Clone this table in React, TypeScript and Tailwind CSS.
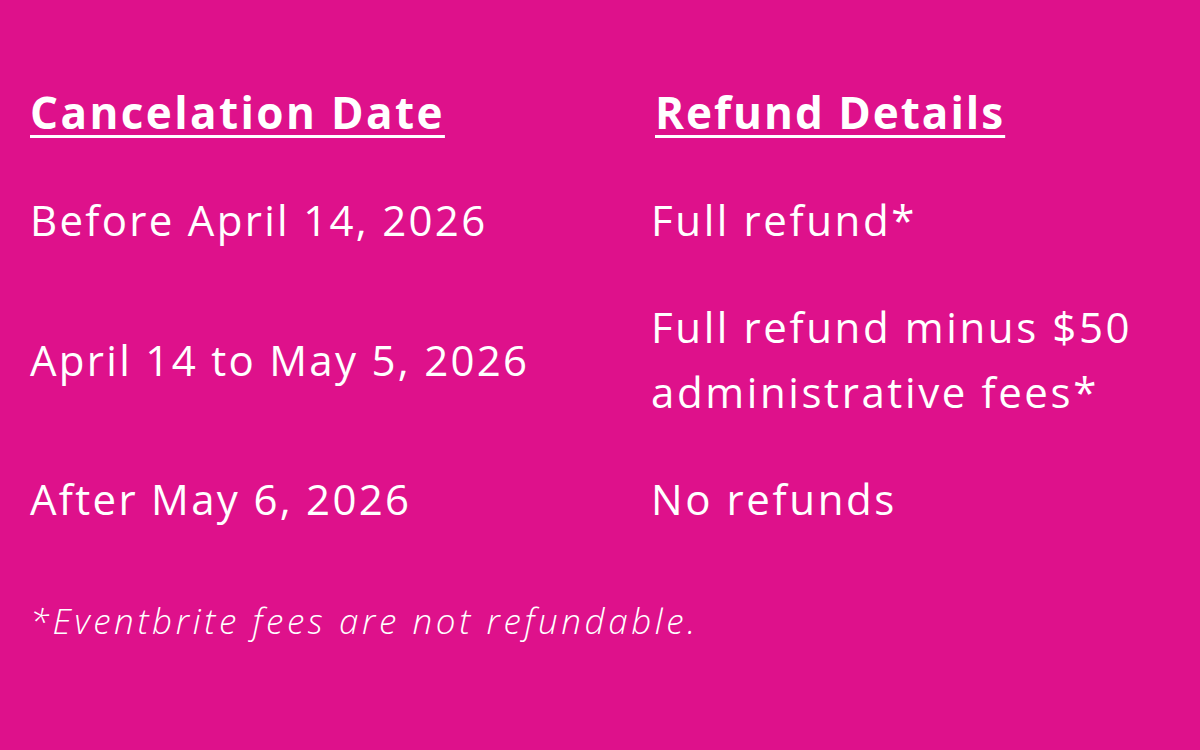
import React from 'react';

const rows = [
  { date: 'Before April 14, 2026', refund: ['Full refund*'] },
  { date: 'April 14 to May 5, 2026', refund: ['Full refund minus $50', 'administrative fees*'] },
  { date: 'After May 6, 2026', refund: ['No refunds'] },
];

const App = () => {
  return (
    <div
      className="w-[1200px] h-[750px] bg-[#de118b] text-white overflow-hidden"
      style={{ fontFamily: '"Open Sans", sans-serif' }}
    >
      <div className="pl-[30px] pt-[80px]">
        <div className="grid grid-cols-[621px_1fr] gap-y-[42px] items-center">
          <h2 className="text-[44px] leading-[65px] font-bold tracking-[2.4px] underline decoration-[3px] underline-offset-[6px]">
            Cancelation Date
          </h2>
          <h2 className="text-[44px] leading-[65px] font-bold tracking-[2px] underline decoration-[3px] underline-offset-[6px] pl-[4px]">
            Refund Details
          </h2>

          {rows.map((row) => (
            <React.Fragment key={row.date}>
              <div className="text-[42px] leading-[65px] tracking-[2.3px]">{row.date}</div>
              <div className="text-[42px] leading-[65px] tracking-[2.6px]">
                {row.refund.map((line) => (
                  <div key={line}>{line}</div>
                ))}
              </div>
            </React.Fragment>
          ))}
        </div>

        <p className="mt-[70px] text-[35px] leading-[40px] italic font-light tracking-[3.6px]">
          *Eventbrite fees are not refundable.
        </p>
      </div>
    </div>
  );
};

export default App;
